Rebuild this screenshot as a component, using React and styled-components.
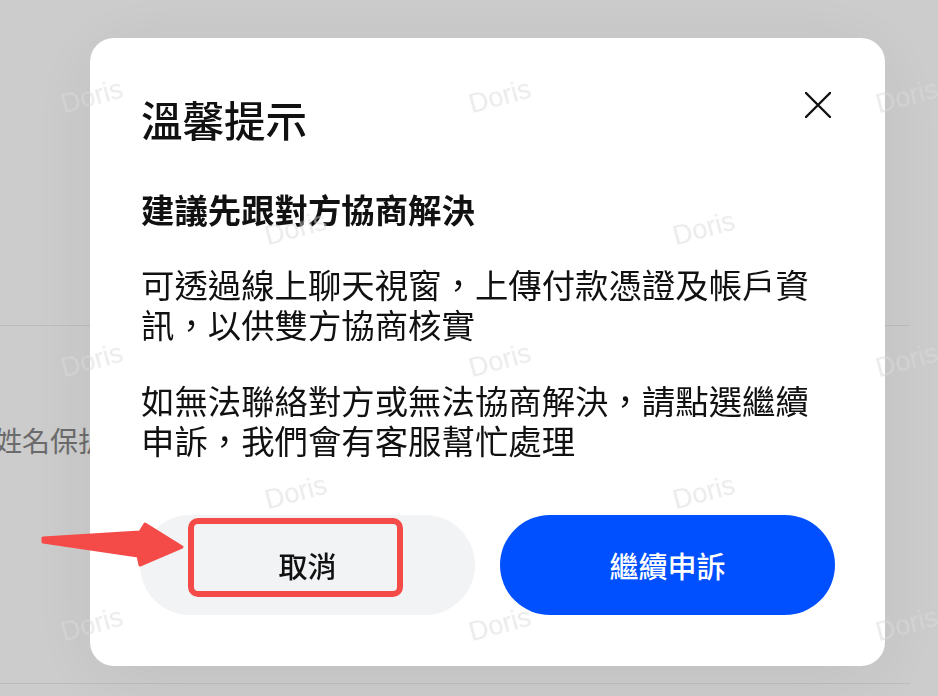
import React from 'react'
import styled, { createGlobalStyle } from 'styled-components'

const GlobalStyle = createGlobalStyle`
  html, body {
    margin: 0;
    padding: 0;
    width: 938px;
    height: 696px;
    overflow: hidden;
    background: #ffffff;
    font-family: 'Noto Sans CJK TC', 'Noto Sans', sans-serif;
  }
  * {
    box-sizing: border-box;
  }
`

const marks = [0, 1, 2, 3, 4].flatMap((row) =>
  (row % 2 === 0 ? [92, 500, 907] : [296, 704]).map((x) => ({
    x,
    y: 97 + row * 132,
  }))
)

const CloseIcon = (props) => (
  <svg width="26" height="26" viewBox="0 0 26 26" {...props}>
    <path
      d="M1 1 L25 25 M25 1 L1 25"
      stroke="#111"
      strokeWidth="2.4"
      strokeLinecap="round"
      fill="none"
    />
  </svg>
)

const Arrow = () => (
  <ArrowSvg width="146" height="48" viewBox="0 0 146 48">
    <polygon
      points="3,18 100,12 105,4 142,27 100,45 98,36 3,22"
      fill="#f44a48"
      stroke="#f44a48"
      strokeWidth="3"
      strokeLinejoin="round"
    />
  </ArrowSvg>
)

export default function App() {
  return (
    <>
      <GlobalStyle />
      <Page>
        <Section $height={326} />
        <Section $height={358}>
          <FieldLabel>姓名保护</FieldLabel>
        </Section>
      </Page>

      <Overlay>
        <Modal>
          <Header>
            <Title>溫馨提示</Title>
            <CloseButton aria-label="close">
              <CloseIcon />
            </CloseButton>
          </Header>
          <Subtitle>建議先跟對方協商解決</Subtitle>
          <Paragraph>可透過線上聊天視窗，上傳付款憑證及帳戶資訊，以供雙方協商核實</Paragraph>
          <Paragraph>如無法聯絡對方或無法協商解決，請點選繼續申訴，我們會有客服幫忙處理</Paragraph>
          <Actions>
            <Button $variant="ghost">
              取消
              <Highlight />
            </Button>
            <Button $variant="primary">繼續申訴</Button>
          </Actions>
        </Modal>
        <Arrow />
      </Overlay>

      <Watermarks>
        {marks.map((m, i) => (
          <Mark key={i} style={{ left: m.x, top: m.y }}>
            Doris
          </Mark>
        ))}
      </Watermarks>
    </>
  )
}

const Page = styled.div`
  width: 910px;
  display: flex;
  flex-direction: column;
`

const Section = styled.div`
  height: ${(props) => props.$height}px;
  border-bottom: 1px solid #ececec;
  display: flex;
  align-items: center;
  padding-bottom: 130px;
`

const FieldLabel = styled.span`
  margin-left: -6px;
  font-size: 28px;
  color: #868686;
`

const Overlay = styled.div`
  position: fixed;
  inset: 0;
  background: rgba(0, 0, 0, 0.2);
  display: flex;
  align-items: flex-start;
  padding: 38px 0 0 90px;
`

const Modal = styled.div`
  width: 795px;
  height: 628px;
  background: #ffffff;
  border-radius: 24px;
  padding: 53px 50px 51px 50px;
  display: flex;
  flex-direction: column;
  box-shadow: 0 10px 80px rgba(0, 0, 0, 0.07);
  color: #111;
`

const Header = styled.div`
  display: flex;
  justify-content: space-between;
  align-items: flex-start;
`

const Title = styled.h2`
  margin: 0;
  font-size: 41.5px;
  line-height: 56px;
  font-weight: 500;
  padding-left: 1px;
`

const CloseButton = styled.button`
  border: none;
  background: none;
  padding: 0;
  margin: 1px 4px 0 0;
  width: 26px;
  height: 26px;
  cursor: pointer;
  display: flex;
  svg {
    display: block;
  }
`

const Subtitle = styled.h3`
  margin: 42px 0 0;
  font-size: 33.4px;
  line-height: 40px;
  font-weight: 700;
  padding-left: 1px;
`

const Paragraph = styled.p`
  margin: 35px 0 0;
  max-width: 680px;
  font-size: 33.4px;
  line-height: 40px;
  font-weight: 400;
  padding-left: 1px;
  & + & {
    margin-top: 36px;
  }
`

const Actions = styled.div`
  margin-top: auto;
  display: flex;
  gap: 25px;
`

const Button = styled.button`
  position: relative;
  flex: 1;
  height: 100px;
  border: none;
  border-radius: 50px;
  font-family: inherit;
  font-size: 29px;
  font-weight: 500;
  cursor: pointer;
  background: ${(props) => (props.$variant === 'primary' ? '#0050ff' : '#f2f3f5')};
  color: ${(props) => (props.$variant === 'primary' ? '#ffffff' : '#111111')};
`

const Highlight = styled.span`
  position: absolute;
  left: 48px;
  top: 3px;
  width: 215px;
  height: 79px;
  border: 6px solid #f44a48;
  border-radius: 10px;
  pointer-events: none;
`

const ArrowSvg = styled.svg`
  position: absolute;
  left: 40px;
  top: 520px;
`

const Watermarks = styled.div`
  position: fixed;
  inset: 0;
  pointer-events: none;
`

const Mark = styled.span`
  position: absolute;
  transform: translate(-50%, -50%) rotate(-15deg);
  font-family: 'Liberation Sans', Arial, sans-serif;
  font-size: 27px;
  color: #dadada;
  opacity: 0.55;
`
